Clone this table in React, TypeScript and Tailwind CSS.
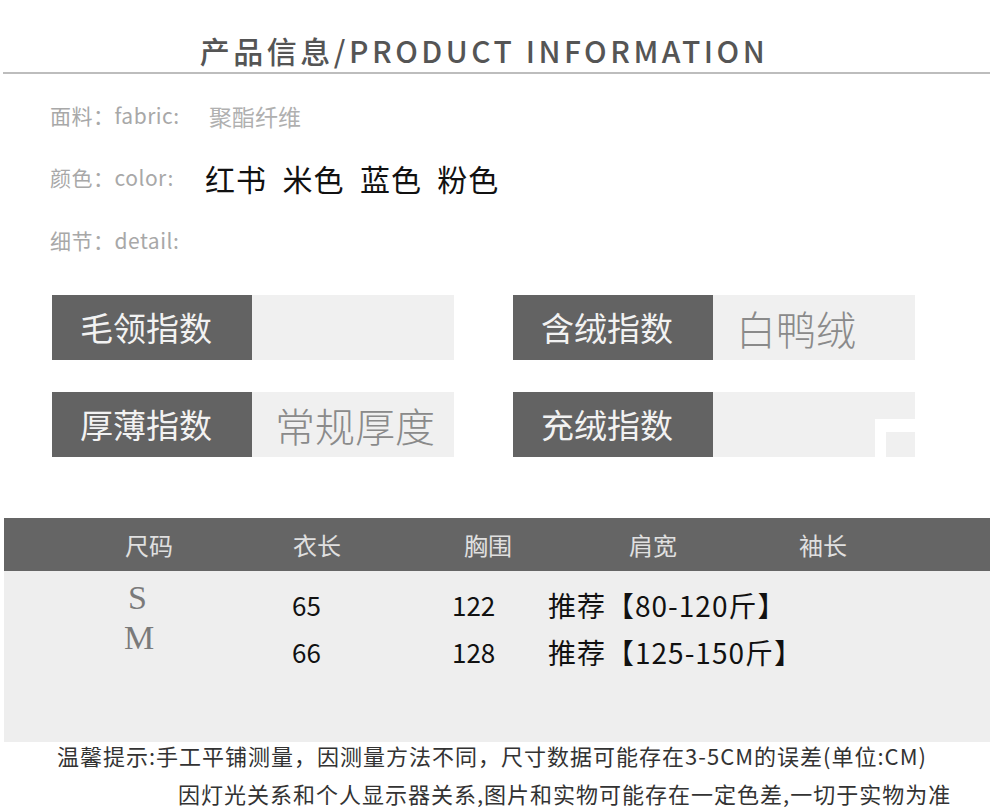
const cjk = { fontFamily: '"Noto Sans CJK SC", "Noto Sans", sans-serif' };

type Spec = { label: string; value?: string };

const leftSpecs: Spec[] = [
  { label: "毛领指数" },
  { label: "厚薄指数", value: "常规厚度" },
];
const rightSpecs: Spec[] = [
  { label: "含绒指数", value: "白鸭绒" },
  { label: "充绒指数" },
];

const sizes = [
  ["65", "122", "80-120斤"],
  ["66", "128", "125-150斤"],
];

function SpecBox({ spec, notch }: { spec: Spec; notch?: boolean }) {
  return (
    <div className="flex h-[65px]">
      <div className="w-[200px] bg-[#636363] flex items-center pl-[28px] text-[33px] text-[#f2f2f2] leading-none">
        {spec.label}
      </div>
      <div className="relative w-[202px] bg-[#f0f0f0] flex items-center pl-[23px] text-[40px] font-light text-[#8a8a8a] leading-none">
        {spec.value}
        {notch && (
          <div className="absolute right-0 bottom-0 w-[40px] h-[38px] bg-white">
            <div className="absolute right-0 bottom-0 w-[29px] h-[25px] bg-[#f0f0f0]" />
          </div>
        )}
      </div>
    </div>
  );
}

function InfoRow({
  label,
  en,
  children,
}: {
  label: string;
  en: string;
  children?: React.ReactNode;
}) {
  return (
    <div className="flex items-center pl-[50px] h-[38px]">
      <span className="text-[21px] text-[#a8a8a8] w-[157px] whitespace-nowrap tracking-[0.5px]">
        {label}：{en}:
      </span>
      {children}
    </div>
  );
}

export default function App() {
  return (
    <main className="w-[990px] h-[808px] overflow-hidden bg-white" style={cjk}>
      {/* title */}
      <div className="h-[72px] flex items-end justify-center pb-[7px] pr-[22px]">
        <h1 className="text-[30px] tracking-[3.5px] text-[#555] font-medium leading-none">
          产品信息/PRODUCT INFORMATION
        </h1>
      </div>
      <div className="ml-[3px] h-[2px] bg-[#bdbdbd]" />

      {/* info rows */}
      <div className="pt-[23px]">
        <InfoRow label="面料" en="fabric">
          <span className="text-[23px] text-[#b0b0b0] ml-[2px]">聚酯纤维</span>
        </InfoRow>
        <div className="h-[24px]" />
        <InfoRow label="颜色" en="color">
          <span className="text-[30px] text-[#111] tracking-[1px] whitespace-nowrap -ml-[2px]">
            红书&nbsp;&nbsp;米色&nbsp;&nbsp;蓝色&nbsp;&nbsp;粉色
          </span>
        </InfoRow>
        <div className="h-[25px]" />
        <InfoRow label="细节" en="detail" />
      </div>

      {/* spec boxes */}
      <div className="flex gap-[59px] pl-[52px] pt-[35px]">
        <div className="flex flex-col gap-[32px]">
          {leftSpecs.map((s) => (
            <SpecBox key={s.label} spec={s} />
          ))}
        </div>
        <div className="flex flex-col gap-[32px]">
          {rightSpecs.map((s, i) => (
            <SpecBox key={s.label} spec={s} notch={i === 1} />
          ))}
        </div>
      </div>

      {/* size table */}
      <div className="ml-[4px] mt-[61px]">
        <div className="h-[53px] bg-[#656565] flex items-center text-[24px] text-[#e0e0e0] leading-none">
          <span className="ml-[121px] w-[168px]">尺码</span>
          <span className="w-[171px]">衣长</span>
          <span className="w-[165px]">胸围</span>
          <span className="w-[170px]">肩宽</span>
          <span>袖长</span>
        </div>
        <div className="h-[171px] bg-[#eeeeee] flex pt-[7px]">
          <div
            className="ml-[120px] w-[168px] flex flex-col text-[34px] text-[#7a7a7a] leading-[40px]"
            style={{ fontFamily: '"Liberation Serif", serif' }}
          >
            <span className="pl-[4px]">S</span>
            <span>M</span>
          </div>
          <div className="flex flex-col pt-[10px] gap-[13px] text-[26px] text-[#111] leading-[34px]">
            {sizes.map(([a, b, c]) => (
              <div key={a} className="flex items-center">
                <span className="w-[160px]">{a}</span>
                <span className="w-[96px]">{b}</span>
                <span className="text-[28px] tracking-[1px] whitespace-nowrap">推荐【{c}】</span>
              </div>
            ))}
          </div>
        </div>
      </div>

      {/* notes */}
      <div className="text-[#333] text-[22px] leading-none tracking-[1px]">
        <p className="pl-[57px] pt-[2px] whitespace-nowrap">
          温馨提示:手工平铺测量，因测量方法不同，尺寸数据可能存在3-5CM的误差(单位:CM)
        </p>
        <p className="pl-[178px] pt-[16px] whitespace-nowrap">
          因灯光关系和个人显示器关系,图片和实物可能存在一定色差,一切于实物为准
        </p>
      </div>
    </main>
  );
}
